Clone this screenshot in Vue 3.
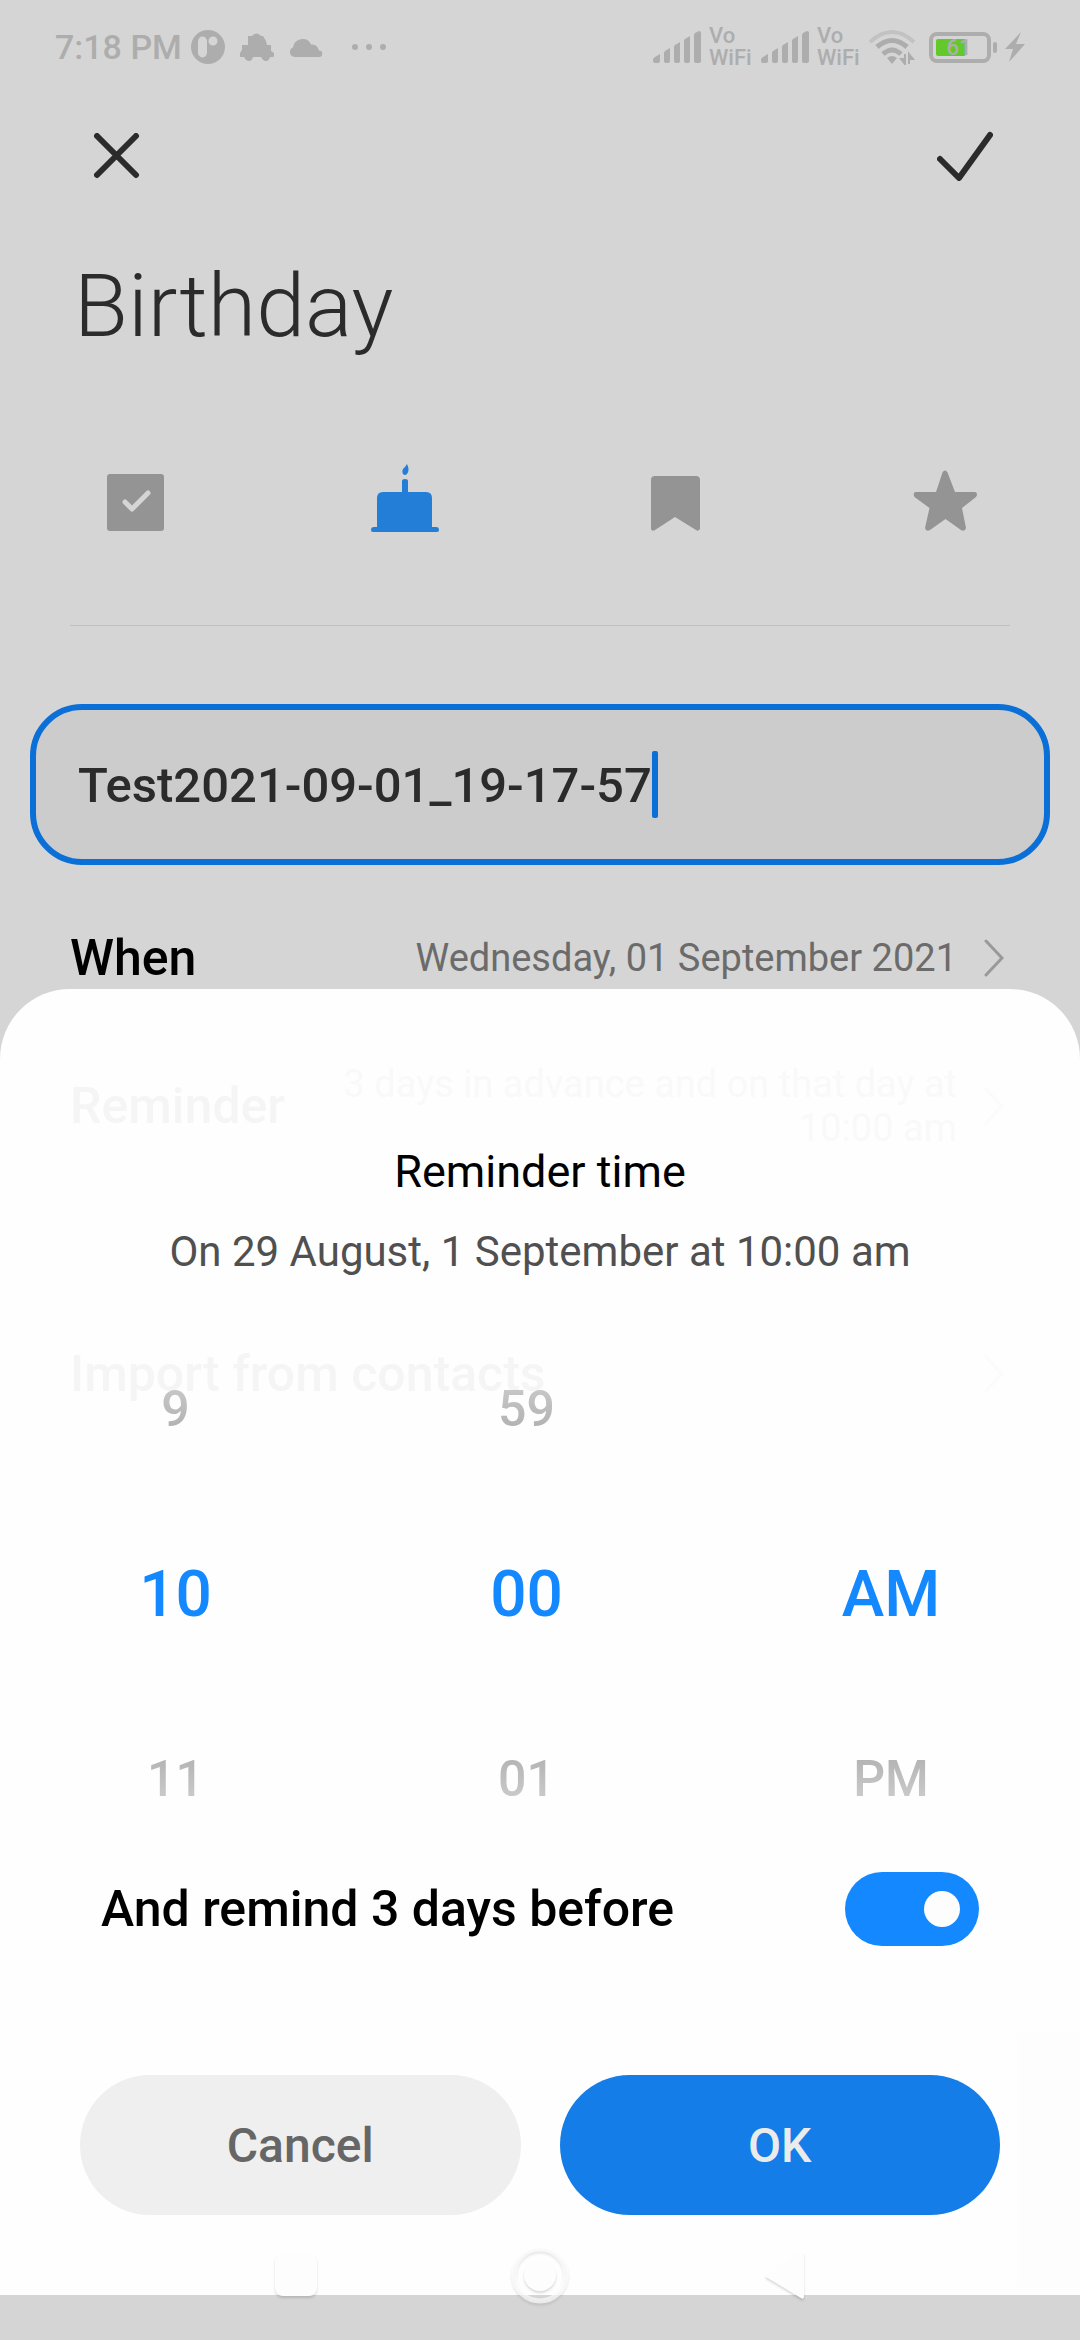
<script setup>
import { ref } from 'vue'

const name = ref('Test2021-09-01_19-17-57')
const remindBefore = ref(true)

const rows = [
  { label: 'When', value: 'Wednesday, 01 September 2021' },
  { label: 'Reminder', value: '3 days in advance and on that day at 10:00 am' },
  { label: 'Import from contacts', value: '', spaced: true },
]

const wheels = [
  { id: 'hour', items: ['9', '10', '11'] },
  { id: 'minute', items: ['59', '00', '01'] },
  { id: 'period', items: ['', 'AM', 'PM'] },
]
</script>

<template>
  <div class="screen">
    <header class="status">
      <div class="status-left">
        <span class="clock">7:18 PM</span>
        <svg width="34" height="34" viewBox="0 0 34 34" aria-hidden="true">
          <path fill="#adadad" fill-rule="evenodd" d="M17 0a17 17 0 1 1 0 34a17 17 0 0 1 0-34zM11.500 6.500a4.500 5 0 0 0-4.500 5v11a4.500 5 0 0 0 9 0v-11a4.500 5 0 0 0-4.500-5zM22 6.500a4.500 4.500 0 1 0 0 9a4.500 4.500 0 0 0 0-9z" />
        </svg>
        <svg width="34" height="28" viewBox="0 0 34 28" aria-hidden="true">
          <path fill="#adadad" d="M8 3h4q5-5 9 0h2l3 5l1 4h4v6l3 2v3q-1 2-3 1h-1q-1 4-4 4q-3 0-5-4h-8q-1 4-4 4q-3 0-5-4H0v-4l2-3v-5h6z" />
        </svg>
        <svg width="34" height="19" viewBox="0 0 34 19" aria-hidden="true">
          <path fill="#adadad" d="M5 19a5 5 0 0 1-1-9.500a9.500 9.500 0 0 1 18-3q6-1 8 6a3.200 3.200 0 0 1 0 6.500z" />
        </svg>
        <svg class="dots" width="34" height="8" viewBox="0 0 34 8" fill="#adadad" aria-hidden="true">
          <circle cx="3" cy="4" r="3" /><circle cx="17" cy="4" r="3" /><circle cx="31" cy="4" r="3" />
        </svg>
      </div>
      <div class="status-right">
        <template v-for="sim in 2" :key="sim">
          <svg width="48" height="32" viewBox="0 0 48 32" fill="#adadad" aria-hidden="true">
            <path d="M0 29q0-2 2-3l5-3v7q0 2-2 2H2q-2 0-2-2zM11 22q0-1 1-2l5-3v13q0 2-2 2h-2q-2 0-2-2zM21 16q0-1 1-2l5-3v19q0 2-2 2h-2q-2 0-2-2zM31 10q0-1 1-2l5-3v25q0 2-2 2h-2q-2 0-2-2zM41 4q0-1 1-2l4-2q2 0 2 2v28q0 2-2 2h-3q-2 0-2-2z" />
          </svg>
          <span class="vowifi">Vo<br />WiFi</span>
        </template>
        <svg class="wifi" width="46" height="36" viewBox="0 0 46 36" fill="none" stroke-width="4" aria-hidden="true">
          <path stroke="#c2c2c2" d="M1 13Q23-7 45 13" />
          <path stroke="#adadad" stroke-width="5" d="M8 18Q23 5 38 18M14 25Q23 17 32 25" />
          <path fill="#adadad" d="M18 29q5-4 10 0l-5 6z" />
          <path fill="#adadad" d="M36 25v10l-4-5h4zM40 35V25l4 5h-4z" stroke="#adadad" stroke-width="2" />
        </svg>
        <svg width="68" height="31" viewBox="0 0 68 31" aria-hidden="true">
          <rect x="2" y="2" width="58" height="27" rx="6" fill="none" stroke="#adadad" stroke-width="4" />
          <rect x="7" y="7" width="30" height="17" rx="2" fill="#63c92b" />
          <rect x="64" y="10" width="4" height="11" rx="2" fill="#adadad" />
          <text x="30" y="23" text-anchor="middle" class="level">61</text>
        </svg>
        <svg width="20" height="30" viewBox="0 0 20 30" aria-hidden="true">
          <path fill="#adadad" d="M16 0L0 17h8L4 30L20 12h-9z" />
        </svg>
      </div>
    </header>

    <nav class="actions">
      <button type="button" aria-label="Close">
        <svg width="46" height="46" viewBox="0 0 46 46" fill="none" stroke="#2b2b2b" stroke-width="6" stroke-linecap="round">
          <path d="M3 3L42 42M42 3L3 42" />
        </svg>
      </button>
      <button type="button" aria-label="Save">
        <svg width="56" height="50" viewBox="0 0 56 50" fill="none" stroke="#2b2b2b" stroke-width="6" stroke-linecap="round" stroke-linejoin="round">
          <path d="M3 28L22 47L53 4" />
        </svg>
      </button>
    </nav>

    <main>
      <h1>Birthday</h1>

      <div class="kinds">
        <button type="button" aria-label="To-do">
          <svg width="68" height="68" viewBox="0 0 68 68">
            <rect x="6" y="10" width="57" height="57" rx="3" fill="#949494" />
            <path d="M24 38l7 7L47 29" fill="none" stroke="#d5d5d5" stroke-width="5" stroke-linecap="round" stroke-linejoin="round" />
          </svg>
        </button>
        <button type="button" aria-label="Birthday" aria-pressed="true">
          <svg width="68" height="68" viewBox="0 0 68 68" fill="#227ed6">
            <path d="M36 0q3 6 0 10q-2 2-4 0q-2-4 2-7zM31 17q0-2 3-2t3 2v12h-6z" />
            <path d="M6 34q0-6 6-6h43q6 0 6 6v29h4q3 0 3 3q0 2-2 2H2q-2 0-2-2q0-3 3-3h3z" />
          </svg>
        </button>
        <button type="button" aria-label="Countdown">
          <svg width="68" height="68" viewBox="0 0 68 68" fill="#949494">
            <path d="M10 16q0-4 4-4h41q4 0 4 4v49q-2 3-4 1L34 53L14 66q-3 2-4-1z" />
          </svg>
        </button>
        <button type="button" aria-label="Anniversary">
          <svg width="68" height="68" viewBox="0 0 68 68" fill="#949494">
            <path d="M31.500 8.500q2.500-4 5 0L44 28h20q3.500 1 1 5L51 44l4 20q-1 4-5 2L34.500 55L19 66q-4 2-5-2l4.500-20L3.500 33q-2-4 1-5H25z" />
          </svg>
        </button>
      </div>

      <hr />

      <label class="field">
        <input v-model="name" type="text" aria-label="Name" />
        <span class="caret"></span>
      </label>

      <a v-for="row in rows" :key="row.label" class="row" :class="{ spaced: row.spaced }" href="#">
        <span class="row-label">{{ row.label }}</span>
        <span class="row-value">{{ row.value }}</span>
        <svg width="20" height="38" viewBox="0 0 20 38" fill="none" stroke="#999" stroke-width="3" stroke-linecap="round" aria-hidden="true">
          <path d="M2 2L18 19L2 36" />
        </svg>
      </a>
    </main>

    <section class="sheet" role="dialog" aria-labelledby="sheet-title">
      <h2 id="sheet-title">Reminder time</h2>
      <p>On 29 August, 1 September at 10:00 am</p>

      <div class="picker">
        <ul v-for="wheel in wheels" :key="wheel.id" :aria-label="wheel.id">
          <li v-for="(item, i) in wheel.items" :key="i" :class="{ selected: i === 1 }">{{ item }}</li>
        </ul>
      </div>

      <label class="toggle">
        <span>And remind 3 days before</span>
        <input v-model="remindBefore" type="checkbox" role="switch" />
      </label>

      <div class="buttons">
        <button type="button">Cancel</button>
        <button type="button" class="primary">OK</button>
      </div>
    </section>

    <div class="system-nav">
      <button type="button" aria-label="Recent apps">
        <svg width="60" height="60" viewBox="0 0 60 60"><rect x="9" y="8" width="42" height="42" rx="8" fill="#fdfdfd" /></svg>
      </button>
      <button type="button" aria-label="Home">
        <svg width="60" height="60" viewBox="0 0 60 60">
          <circle cx="30" cy="29" r="26" fill="none" stroke="#fff" stroke-opacity=".65" stroke-width="5" />
          <circle cx="30" cy="29" r="16" fill="#fdfdfd" />
        </svg>
      </button>
      <button type="button" aria-label="Back">
        <svg width="60" height="60" viewBox="0 0 60 60"><path d="M12 29L47 6q3-1 3 2v42q0 4-3 2L12 31q-1-1 0-2z" fill="#fdfdfd" /></svg>
      </button>
    </div>
  </div>
</template>

<style>
body {
  background: #d5d5d5;
}
</style>

<style scoped>
.screen {
  position: relative;
  min-height: 100vh;
  box-sizing: border-box;
  background: #d5d5d5;
  font-family: Roboto, sans-serif;
  color: #000;
}

svg {
  display: block;
  flex: none;
}

button {
  padding: 0;
  border: 0;
  background: none;
  font: inherit;
}

.status {
  display: flex;
  justify-content: space-between;
  align-items: center;
  height: 94px;
  padding: 0 55px;
  color: #adadad;
}

.status-left,
.status-right {
  display: flex;
  align-items: center;
}

.status-left {
  gap: 15px;
}

.clock {
  margin-right: -6px;
  font-size: 34px;
  font-weight: 500;
}

.dots {
  margin-left: 14px;
}

.status-right {
  gap: 8px;
}

.vowifi {
  width: 44px;
  font-size: 22px;
  font-weight: 500;
  line-height: 22px;
}

.wifi {
  margin-right: 6px;
}

.level {
  fill: #adadad;
  font-size: 22px;
  font-weight: 500;
}

.actions {
  display: flex;
  justify-content: space-between;
  align-items: center;
  height: 124px;
  padding: 0 87px 0 94px;
}

h1 {
  margin: 0;
  padding: 36px 74px 0;
  font-size: 88px;
  font-weight: 300;
  line-height: 104px;
  color: #2b2b2b;
}

.kinds {
  display: grid;
  grid-template-columns: repeat(4, 1fr);
  justify-items: center;
  padding: 106px 0 93px;
}

hr {
  height: 1px;
  margin: 0 70px;
  border: 0;
  background: #bfbfbf;
}

.field {
  display: flex;
  align-items: center;
  margin: 78px 30px 19px;
  height: 149px;
  padding: 0 42px;
  border: 6px solid #0b6fd8;
  border-radius: 52px;
  background: #ccc;
}

.field input {
  field-sizing: content;
  padding: 2px 0 0;
  border: 0;
  outline: 0;
  background: none;
  font: 500 49px Roboto, sans-serif;
  color: #2b2b2b;
}

.caret {
  width: 6px;
  height: 67px;
  border-radius: 2px;
  background: #0b6fd8;
}

.row {
  display: flex;
  align-items: center;
  height: 148px;
  padding: 0 76px 0 70px;
  color: #000;
  text-decoration: none;
}

.row.spaced {
  margin-top: 120px;
}

.row-label {
  flex: none;
  font-size: 50px;
  font-weight: 500;
}

.row-value {
  flex: 1;
  margin: 0 27px 0 50px;
  font-size: 38px;
  line-height: 44px;
  text-align: right;
  color: #6b6b6b;
}

.sheet {
  position: absolute;
  right: 0;
  bottom: 45px;
  left: 0;
  padding-top: 156px;
  border-radius: 70px 70px 0 0;
  background: rgba(255, 255, 255, 0.96);
  text-align: center;
}

h2 {
  margin: 0;
  font-size: 45px;
  font-weight: 400;
  line-height: 54px;
}

.sheet p {
  margin: 28px 0 40px;
  font-size: 42px;
  line-height: 50px;
  color: #505050;
}

.picker {
  display: grid;
  grid-template-columns: 13fr 13fr 14fr;
  mask-image: linear-gradient(transparent -26px, #000 154px, #000 394px, transparent 574px);
}

.picker ul {
  margin: 0;
  padding: 0;
  list-style: none;
}

.picker li {
  height: 185px;
  font-size: 50px;
  font-weight: 500;
  line-height: 185px;
  color: #999;
}

.picker li.selected {
  font-size: 64px;
  color: #1488ff;
}

.toggle {
  display: flex;
  justify-content: space-between;
  align-items: center;
  padding: 0 101px;
  font-size: 50px;
  font-weight: 500;
}

.toggle input {
  display: flex;
  justify-content: flex-end;
  align-items: center;
  width: 134px;
  height: 74px;
  margin: 0;
  padding: 0 19px;
  box-sizing: border-box;
  appearance: none;
  border-radius: 37px;
  background: #1488ff;
}

.toggle input:not(:checked) {
  justify-content: flex-start;
  background: #d5d5d5;
}

.toggle input::before {
  content: '';
  width: 36px;
  height: 36px;
  border-radius: 50%;
  background: #fdfdfd;
}

.buttons {
  display: flex;
  gap: 39px;
  padding: 129px 80px 80px;
}

.buttons button {
  flex: 1;
  height: 140px;
  border-radius: 70px;
  background: #efefef;
  font-size: 48px;
  font-weight: 500;
  color: #666;
}

.buttons .primary {
  background: #147de8;
  color: #ebebeb;
}

.system-nav {
  position: absolute;
  right: 0;
  bottom: 34px;
  left: 0;
  display: flex;
  justify-content: center;
  gap: 184px;
}

.system-nav svg {
  filter: drop-shadow(0 2px 1px rgba(0, 0, 0, 0.14));
}
</style>
